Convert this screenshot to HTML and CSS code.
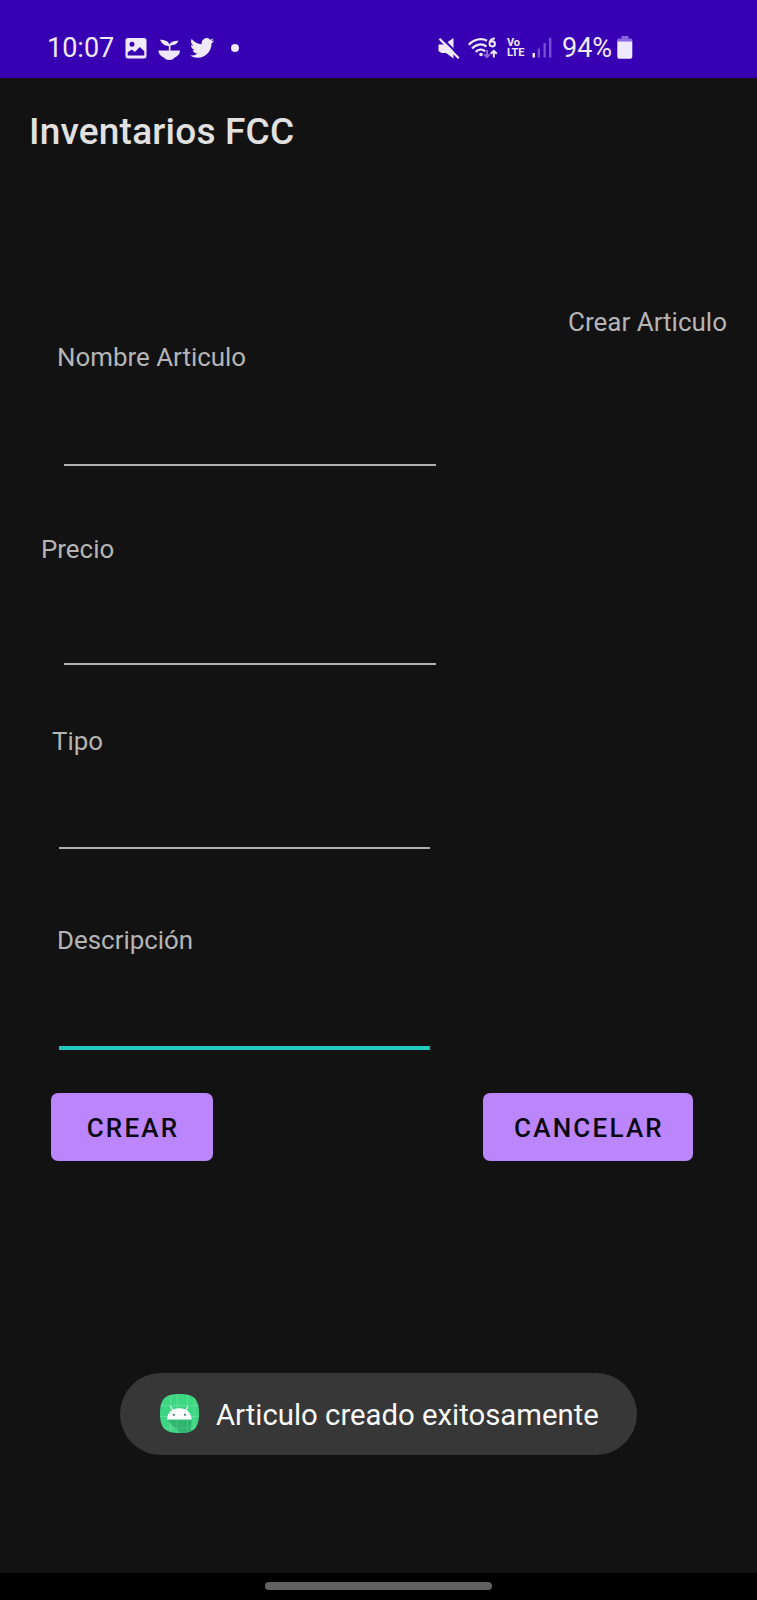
FILE: index.html
```html
<!DOCTYPE html>
<html lang="es">
<head>
<meta charset="utf-8">
<title>Inventarios FCC</title>
<link rel="stylesheet" href="styles.css">
</head>
<body>
<div class="screen">
  <header class="status">
    <div class="status-left">
      <span class="time">10:07</span>
      <svg class="ic-photo" width="22" height="21" viewBox="0 0 22 21"><path fill="currentColor" fill-rule="evenodd" d="M3 0h16a2.500 2.500 0 0 1 2.500 2.500v15.500a2.500 2.500 0 0 1-2.500 2.500H3A2.500 2.500 0 0 1 .5 18V2.500A2.500 2.500 0 0 1 3 0zM7 3.800a2.500 2.500 0 1 0 0 5 2.500 2.500 0 0 0 0-5zM2.700 14.200v3.200h16.600v-4.200l-4.500-4.200-5 5-3-2.500z"/></svg>
      <svg class="ic-plant" width="23" height="22" viewBox="0 0 23 22"><path fill="currentColor" d="M.5 11.500h21.500c0 3.600-2.600 6-5.700 7.300-.7 1.500-2.500 2.200-5 2.200s-4.300-.7-5-2.200C3.100 17.500.5 15.100.5 11.500z"/><path fill="currentColor" d="M2 .7c5 0 8.200 1.500 9.300 4.700C12.800 3 16 1.600 20.500 1.800c-1.200 3.200-3.700 4.500-8 4.600v5.300h-1.700V6.900C6.500 7 3.700 4.500 2 .7z"/></svg>
      <svg class="ic-bird" width="24" height="20" viewBox="0 0 24 20"><path fill="currentColor" d="M24 2.400a10 10 0 0 1-2.800.8A5 5 0 0 0 23.300.5a10 10 0 0 1-3.100 1.200A4.900 4.900 0 0 0 11.800 6.200 14 14 0 0 1 1.700 1a4.900 4.900 0 0 0 1.500 6.600A5 5 0 0 1 1 7v.1a4.900 4.900 0 0 0 3.900 4.800 5 5 0 0 1-2.200.1 4.900 4.900 0 0 0 4.600 3.400A9.900 9.900 0 0 1 0 17.500 14 14 0 0 0 7.500 19.700c9.100 0 14.100-7.500 14-14.200A10 10 0 0 0 24 2.400z"/></svg>
      <span class="dot"></span>
    </div>
    <div class="status-right">
      <svg class="ic-mute" width="22" height="22" viewBox="0 0 22 22"><path fill="currentColor" d="M.5 6.500h5.500L15.500 0v20.500L8 15H3.500L.5 13z"/><path stroke="#3700b3" stroke-width="2" d="M3.500-.5 22 18.300"/><path stroke="currentColor" stroke-width="2.200" d="M1.500.8 20.800 20.300"/></svg>
      <svg class="ic-wifi" width="30" height="23" viewBox="0 0 30 23"><g fill="none" stroke="currentColor" stroke-width="2.200"><path d="M.8 7.800C5.800 2 13.500.8 19 3.800"/><path d="M4 11.500c4-4.600 10-5.300 14.500-2"/><path d="M7.700 15c2.800-3 6.800-3.200 9.500-.8"/><path stroke-width="2" d="M27 1.600c-3.700-.2-5.500 2-5.500 5.200a2.700 2.600 0 1 0 2.800-2.600c-1.300 0-2.300.8-2.600 1.900"/><path stroke-width="2" d="M25.800 20.500v-6.500M22.800 16.800l3-3 3 3"/><path stroke="#8a66d9" stroke-width="2" d="M19 13v7M16 17.200l3 3 3-3"/></g><circle cx="13" cy="17.500" r="1.800" fill="currentColor"/></svg>
      <span class="volte"><span>Vo</span><span>LTE</span></span>
      <svg class="ic-signal" width="21" height="22" viewBox="0 0 21 22"><path fill="currentColor" d="M.5 16H3v4.500H.5z"/><path fill="#7450d2" d="M5.700 11.500H8v9H5.700zM11.500 6h2.300v14.500h-2.300zM17 .8h2.400v19.700H17z"/></svg>
      <span class="percent">94%</span>
      <svg class="ic-battery" width="16" height="24" viewBox="0 0 16 24"><path fill="#8a66e0" d="M4.500 0h7v2.500H14A1.500 1.500 0 0 1 15.300 4v2H.3V4a1.500 1.500 0 0 1 1.300-1.500h2.900z"/><path fill="currentColor" d="M.3 5.500h15v15.300a2 2 0 0 1-2 2h-11a2 2 0 0 1-2-2z"/></svg>
    </div>
  </header>
  <div class="appbar"><h1 class="title">Inventarios FCC</h1></div>
  <main class="form">
    <div class="heading">Crear Articulo</div>
    <label class="label label-name" for="name">Nombre Articulo</label>
    <input class="field field-name" id="name">
    <label class="label label-price" for="price">Precio</label>
    <input class="field field-price" id="price">
    <label class="label label-type" for="type">Tipo</label>
    <input class="field field-type" id="type">
    <label class="label label-desc" for="desc">Descripción</label>
    <input class="field field-desc" id="desc">
    <div class="actions">
      <button class="btn btn-create">CREAR</button>
      <button class="btn btn-cancel">CANCELAR</button>
    </div>
  </main>
  <div class="toast">
    <svg class="app-icon" width="39" height="39" viewBox="0 0 39 39"><defs><clipPath id="squircle"><path d="M19.500 0C34 0 39 5 39 19.500S34 39 19.500 39 0 34 0 19.500 5 0 19.500 0z"/></clipPath></defs><g clip-path="url(#squircle)"><path fill="#3dd682" d="M0 0h39v39H0z"/><path stroke="#70e0a2" stroke-width=".7" d="M10.500 0v39M17 0v39M27.500 0v39M0 11.500h39M0 22.500h39M0 34h39M34 0v39"/><path fill="#30b671" d="m7 25.500 13 13.500h11v-7l1-6.500z"/><path stroke="#55c98b" stroke-width=".6" d="M17 25v14M27.500 25v14M12 34h27"/></g><path fill="#fff" d="M7 25.500C7.500 18 12.500 14.200 19.300 14.200S31 18 31.700 25.500z"/><path stroke="#fff" stroke-width="1" d="m13 16.500-2.300-4.300M25.700 16.500l2.300-4.300"/><circle cx="13.800" cy="20.800" r="1.100" fill="#35855c"/><circle cx="25" cy="20.800" r="1.100" fill="#35855c"/></svg>
    <span class="toast-text">Articulo creado exitosamente</span>
  </div>
  <footer class="nav"><span class="handle"></span></footer>
</div>
</body>
</html>
```
FILE: styles.css
```css
* { box-sizing: border-box; }
body { margin: 0; background: #121212; font-family: Roboto, sans-serif; }
svg { display: block; flex: none; }
.screen { width: 757px; height: 1600px; display: flex; flex-direction: column; background: #121212; overflow: hidden; }

.status { height: 78px; flex: none; display: flex; justify-content: space-between; background: #3700b3; color: #f0e9fb; padding: 32px 124px 0 47px; }
.status-left, .status-right { display: flex; height: 32px; align-items: flex-start; }
.time, .percent { font-size: 27px; line-height: 32px; white-space: nowrap; }
.time { width: 78px; }
.ic-photo { margin-top: 6px; }
.ic-plant { margin: 7px 0 0 11px; }
.ic-bird { margin: 6px 0 0 9px; }
.dot { width: 8px; height: 8px; border-radius: 50%; background: currentColor; margin: 12px 0 0 17px; }
.ic-mute { margin: 6px 8px 0 0; }
.ic-wifi { margin: 5px 9px 0 0; }
.volte { width: 25px; margin-top: 6px; display: flex; flex-direction: column; font-size: 11px; font-weight: 700; line-height: 10px; letter-spacing: -.2px; }
.ic-signal { margin: 5px 9px 0 0; }
.percent { width: 55px; }
.ic-battery { margin-top: 4px; }

.appbar { height: 103px; flex: none; padding: 32px 0 0 29px; }
.title { margin: 0; font-size: 37px; line-height: 44px; font-weight: 500; letter-spacing: .2px; color: #e1e1e1; white-space: nowrap; }

.form { display: flex; flex-direction: column; align-items: flex-start; margin-top: 126px; }
.heading, .label { font-size: 25.900px; line-height: 30px; color: #b5b5b5; white-space: nowrap; }
.heading { align-self: flex-end; margin-right: 30px; font-size: 26px; }
.label-name { margin: 5px 0 0 57px; }
.label-price { margin: 68px 0 0 41px; }
.label-type { margin: 61px 0 0 52px; }
.label-desc { margin: 76px 0 0 57px; }
.field { display: block; width: 371px; padding: 0; border: 0; border-bottom: 2px solid #b0b0b0; border-radius: 0; background: transparent; color: #e1e1e1; font: 32px Roboto, sans-serif; outline: none; }
.field-name { height: 94px; width: 372px; margin-left: 64px; }
.field-price { height: 101px; width: 372px; margin-left: 64px; }
.field-type { height: 93px; margin-left: 59px; }
.field-desc { height: 95px; margin-left: 59px; border-bottom: 4px solid #20cdbd; }
.actions { align-self: stretch; display: flex; justify-content: space-between; margin-top: 43px; padding: 0 64px 0 51px; }
.btn { height: 68px; padding: 2px 0 0 2px; border: 0; border-radius: 7px; background: #bb86fc; color: #0a0610; font: 500 26px/66px Roboto, sans-serif; letter-spacing: 2.200px; }
.btn-create { width: 162px; }
.btn-cancel { width: 210px; }

.toast { align-self: center; width: 517px; height: 82px; flex: none; display: flex; margin-top: 212px; padding: 21px 0 0 40px; border-radius: 41px; background: #373737; color: #fafafa; }
.toast-text { margin-left: 17px; font-size: 29.300px; line-height: 42px; white-space: nowrap; }

.nav { height: 27px; flex: none; display: flex; justify-content: center; margin-top: auto; padding-top: 9px; background: #000; }
.handle { width: 227px; height: 8px; border-radius: 4px; background: #616161; }
```
